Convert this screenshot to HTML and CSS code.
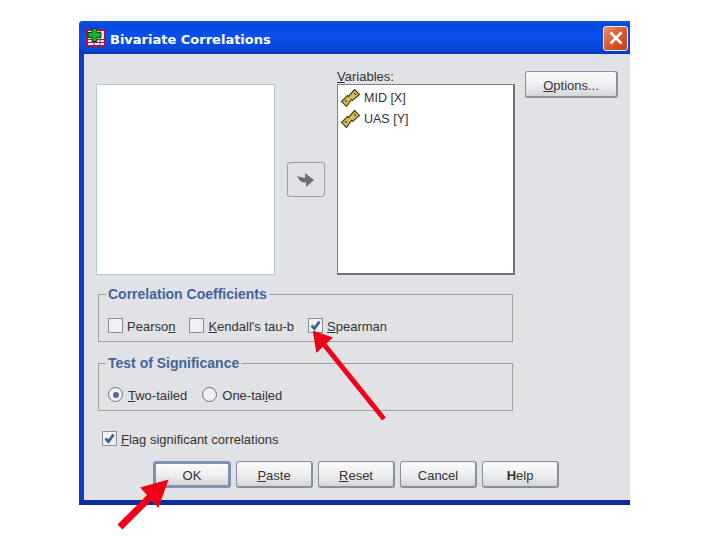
FILE: index.html
```html
<!DOCTYPE html>
<html lang="en">
<head>
    <meta charset="UTF-8">
    <title>Bivariate Correlations</title>
    <link rel="stylesheet" href="styles.css">
</head>
<body>

    <div class="window">
        <div class="titlebar">
            <svg class="app-icon" width="20" height="20" viewBox="0 0 20 20">
                <rect x="0" y="1" width="20" height="18" fill="#a01848"/>
                <rect x="2" y="3" width="16" height="14" fill="#f6ecec"/>
                <path d="M2 11.500h16M2 14.500h16M8 11v6M14 3v14" stroke="#a01848" stroke-width="1" fill="none"/>
                <path d="M6 0.500h5v4h4v5h-4v4H6v-4H2v-5h4z" fill="#14b030" stroke="#0c3a18" stroke-width="1"/>
            </svg>
            <span class="title">Bivariate Correlations</span>
            <button class="close">
                <svg width="14" height="14" viewBox="0 0 14 14">
                    <path d="M1.500 1.500l11 11M12.500 1.500l-11 11" stroke="#fff" stroke-width="2.600" fill="none"/>
                </svg>
            </button>
        </div>

        <div class="content">
            <div class="top-row">
                <div class="listbox source"></div>
                <button class="move-btn">
                    <svg width="20" height="16" viewBox="0 0 20 16">
                        <path d="M1 4l5 1.500 3 .5V1l9 7-8 7v-4.500H7L4 9z" fill="#6f7074"/>
                    </svg>
                </button>
                <div class="vars">
                    <label class="vars-label"><u>V</u>ariables:</label>
                    <div class="listbox target">
                        <div class="var-item">
                            <svg class="ruler" width="20" height="18" viewBox="0 0 20 18">
                                <path d="M0.500 12.500L6.500 6.500 7.500 7.500 13.500 0.500 18.500 5.500 11.500 11.500 10.500 10.500 5.500 17.500z" fill="#d8bc58" stroke="#4a4020" stroke-width="1.200"/>
                                <path d="M4 11l2 2M13 4l2 2" stroke="#6a5a28" stroke-width="1.200"/>
                            </svg>
                            <span>MID [X]</span>
                        </div>
                        <div class="var-item">
                            <svg class="ruler" width="20" height="18" viewBox="0 0 20 18">
                                <path d="M0.500 12.500L6.500 6.500 7.500 7.500 13.500 0.500 18.500 5.500 11.500 11.500 10.500 10.500 5.500 17.500z" fill="#d8bc58" stroke="#4a4020" stroke-width="1.200"/>
                                <path d="M4 11l2 2M13 4l2 2" stroke="#6a5a28" stroke-width="1.200"/>
                            </svg>
                            <span>UAS [Y]</span>
                        </div>
                    </div>
                </div>
                <button class="btn options"><u>O</u>ptions...</button>
            </div>

            <fieldset class="group coeff">
                <legend>Correlation Coefficients</legend>
                <div class="opts">
                    <label class="opt"><span class="check"></span><span class="opt-text">Pearso<u>n</u></span></label>
                    <label class="opt"><span class="check"></span><span class="opt-text"><u>K</u>endall's tau-b</span></label>
                    <label class="opt"><span class="check on"><svg width="13" height="13" viewBox="0 0 13 13"><path d="M2.500 6.500l3 3 5-7" stroke="#3c5f98" stroke-width="2.800" fill="none"/></svg></span><span class="opt-text"><u>S</u>pearman</span></label>
                </div>
            </fieldset>

            <fieldset class="group signif">
                <legend>Test of Significance</legend>
                <div class="opts">
                    <label class="opt"><span class="radio on"></span><span class="opt-text"><u>T</u>wo-tailed</span></label>
                    <label class="opt"><span class="radio"></span><span class="opt-text">One-tai<u>l</u>ed</span></label>
                </div>
            </fieldset>

            <label class="opt flag"><span class="check on"><svg width="13" height="13" viewBox="0 0 13 13"><path d="M2.500 6.500l3 3 5-7" stroke="#3c5f98" stroke-width="2.800" fill="none"/></svg></span><span class="opt-text"><u>F</u>lag significant correlations</span></label>

            <div class="actions">
                <button class="btn default">OK</button>
                <button class="btn"><u>P</u>aste</button>
                <button class="btn"><u>R</u>eset</button>
                <button class="btn">Cancel</button>
                <button class="btn"><b>H</b>elp</button>
            </div>
        </div>
    </div>

    <!-- red arrows drawn over the dialog -->
    <svg class="arrows" width="720" height="540" viewBox="0 0 720 540">
        <path d="M384 419L322 342" stroke="#f00018" stroke-width="5" fill="none"/>
        <path d="M314 332L331 338 317 351z" fill="#f00018" stroke="#f00018" stroke-width="2"/>
        <path d="M120 527L155 492" stroke="#f00018" stroke-width="7" fill="none"/>
        <path d="M167 481L142 488 158 506z" fill="#f00018" stroke="#f00018" stroke-width="2"/>
    </svg>

</body>
</html>
```

FILE: styles.css
```css
body {
    margin: 0;
    background-color: #fff;
    font-family: "Liberation Sans", Arial, sans-serif;
    font-size: 13px;
    color: #333;
    overflow: hidden;
}

.window {
    width: 551px;
    height: 484px;
    margin: 21px 0 0 79px;
    display: flex;
    flex-direction: column;
    background-color: #0a3fd0;
    border-bottom: 5px solid #0a2f9c;
    box-sizing: border-box;
    border-radius: 4px 0 0 0;
}

/* title bar */
.titlebar {
    height: 33px;
    flex: none;
    display: flex;
    align-items: center;
    padding: 0 2px 0 7px;
    box-sizing: border-box;
    background: linear-gradient(#0a58e0 0, #0648dc 12%, #0a50ee 45%, #0646d8 85%, #0438b8 100%);
    border-radius: 4px 0 0 0;
}

.app-icon {
    flex: none;
}

.title {
    margin: 3px 0 0 4px;
    font-family: "DejaVu Sans", sans-serif;
    font-weight: bold;
    font-size: 13px;
    color: #fff;
    flex: 1;
}

.close {
    width: 25px;
    height: 25px;
    margin-top: 1px;
    padding: 0;
    display: flex;
    align-items: center;
    justify-content: center;
    border: 1px solid #e8e8f0;
    border-radius: 3px;
    background: linear-gradient(135deg, #e89070, #d85a30 50%, #c04418);
}

/* dialog body */
.content {
    flex: 1;
    margin-left: 5px;
    padding: 17px 0 0 12px;
    background-color: #e1e2e6;
    display: flex;
    flex-direction: column;
}

.top-row {
    display: flex;
    height: 204px;
}

.listbox {
    background-color: #fff;
    box-sizing: border-box;
}

.source {
    width: 179px;
    height: 191px;
    margin-top: 13px;
    border: 1px solid #b4c8d4;
}

.move-btn {
    width: 38px;
    height: 35px;
    margin: 91px 12px 0;
    padding: 0;
    display: flex;
    align-items: center;
    justify-content: center;
    background-color: #e1e2e6;
    border: 1px solid #9a9ca0;
    border-radius: 3px;
}

.vars {
    width: 178px;
    margin-right: 10px;
}

.vars-label {
    display: block;
    height: 13px;
    line-height: 11px;
}

.target {
    height: 191px;
    padding: 2px 0 0 3px;
    border: 1px solid #808080;
    border-right: 2px solid #707070;
    border-bottom: 2px solid #707070;
    font-size: 12.5px;
}

.var-item {
    display: flex;
    align-items: center;
    height: 21px;
    gap: 3px;
}

.btn {
    width: 77px;
    height: 27px;
    padding: 2px 0 0;
    font-family: inherit;
    font-size: 13px;
    color: #333;
    background: linear-gradient(#fbfbfb, #eeeef0 55%, #d4d5da);
    border: 1px solid #8a9098;
    border-right-width: 2px;
    border-bottom-width: 2px;
    border-radius: 3px;
}

.options {
    width: 93px;
}

/* option groups */
.group {
    width: 415px;
    height: 55px;
    margin: 0 0 0 2px;
    padding: 17px 0 0 9px;
    box-sizing: border-box;
    border: 1px solid #a0a0a0;
    border-radius: 0;
}

.group legend {
    padding: 0 2px;
    margin-left: -2px;
    font-weight: bold;
    font-size: 14px;
    color: #44659c;
    line-height: 14px;
}

.opts {
    display: flex;
    gap: 14px;
}

.coeff {
    margin-top: 12px;
}

.signif {
    margin-top: 14px;
}

.opt {
    display: flex;
    align-items: center;
    gap: 4px;
    height: 15px;
    white-space: nowrap;
}

.opt-text {
    padding-top: 2px;
}

.signif .opt {
    gap: 5px;
}

.signif .opts {
    gap: 15px;
}

.check {
    width: 15px;
    height: 15px;
    box-sizing: border-box;
    flex: none;
    display: flex;
    align-items: center;
    justify-content: center;
    border: 1px solid #8a9098;
    background-color: #f1f1f4;
}

.radio {
    width: 15px;
    height: 15px;
    box-sizing: border-box;
    flex: none;
    border: 1px solid #6a7078;
    border-radius: 50%;
    background-color: #f1f1f4;
    display: flex;
    align-items: center;
    justify-content: center;
}

.radio.on::after {
    content: "";
    width: 6px;
    height: 6px;
    border-radius: 50%;
    background-color: #4a6a9c;
}

.flag {
    margin: 20px 0 0 6px;
}

.actions {
    display: flex;
    gap: 5px;
    margin: 15px 0 0 57px;
}

.default {
    width: 78px;
    border: 3px solid #7f93b4;
}

.actions b {
    font-weight: bold;
}

.arrows {
    position: absolute;
    left: 0;
    top: 0;
    pointer-events: none;
}
```
